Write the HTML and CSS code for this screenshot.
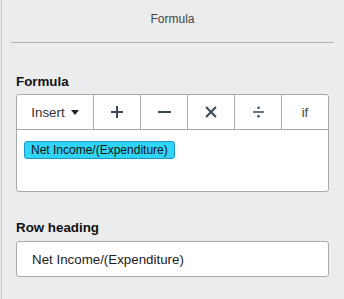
FILE: index.html
```html
<!DOCTYPE html>
<html>
<head>
  <meta charset="utf-8">
  <link rel="stylesheet" href="styles.css">
</head>
<body>
<div class="panel">
  <div class="panel-header">Formula</div>
  <div class="panel-body">
    <div class="field-label">Formula</div>
    <div class="formula-box">
      <div class="toolbar">
        <div class="tool tool-insert">Insert <span class="caret"></span></div>
        <div class="tool">
          <svg width="12" height="12" viewBox="0 0 12 12"><path d="M6 0V12M0 6H12" stroke="#3b4858" stroke-width="2"/></svg>
        </div>
        <div class="tool">
          <svg width="13" height="12" viewBox="0 0 13 12"><path d="M0 6H13" stroke="#3b4858" stroke-width="2"/></svg>
        </div>
        <div class="tool">
          <svg width="12" height="12" viewBox="0 0 12 12"><path d="M1 1L11 11M11 1L1 11" stroke="#3b4858" stroke-width="2"/></svg>
        </div>
        <div class="tool">
          <svg width="11" height="12" viewBox="0 0 11 12"><path d="M0 6H11" stroke="#3b4858" stroke-width="1.5"/><circle cx="5.5" cy="1.8" r="1.3" fill="#3b4858"/><circle cx="5.5" cy="10.2" r="1.3" fill="#3b4858"/></svg>
        </div>
        <div class="tool tool-if">if</div>
      </div>
      <div class="formula-area">
        <span class="chip">Net Income/(Expenditure)</span>
      </div>
    </div>
    <div class="field-label label-row">Row heading</div>
    <div class="text-input">Net Income/(Expenditure)</div>
  </div>
</div>
</body>
</html>
```

FILE: styles.css
```css
body {
  margin: 0;
  background: #ebecee;
  font-family: "Liberation Sans", Arial, sans-serif;
  color: #222;
}

.panel {
  margin-left: 1px;
  border-left: 1px solid #c5c7ca;
  height: 299px;
  box-sizing: border-box;
}

.panel-header {
  margin: 0 10px 0 9px;
  height: 43px;
  box-sizing: border-box;
  padding-top: 12px;
  font-size: 12px;
  line-height: 14px;
  color: #444;
  text-align: center;
  border-bottom: 1px solid #aeb3ba;
}

.panel-body {
  padding: 31px 15px 0 14px;
}

.field-label {
  font-size: 13.33px;
  font-weight: bold;
  line-height: 16px;
  color: #111;
  margin-bottom: 4px;
}

.label-row {
  margin-top: 28px;
  margin-bottom: 5px;
}

.formula-box {
  background: #fff;
  border: 1px solid #a9a9a9;
  border-radius: 3px;
}

.toolbar {
  display: flex;
  height: 34px;
  border-bottom: 1px solid #a9a9a9;
}

.tool {
  flex: 1;
  display: flex;
  align-items: center;
  justify-content: center;
  border-left: 1px solid #a9a9a9;
  font-size: 13.33px;
  color: #333;
}

.tool:first-child {
  border-left: 0;
}

.tool-insert {
  flex: 0 0 76px;
}

.caret {
  display: inline-block;
  margin-left: 6px;
  border-left: 4.5px solid transparent;
  border-right: 4.5px solid transparent;
  border-top: 5px solid #222;
}

.tool-if {
  color: #444;
}

.formula-area {
  height: 61px;
  box-sizing: border-box;
  padding: 10px 7px;
}

.chip {
  display: inline-block;
  font-size: 12px;
  line-height: 16px;
  padding: 0 6px;
  background: #30d4f4;
  border: 1px solid #1d98cc;
  border-radius: 3px;
  color: #111;
}

.text-input {
  background: #fff;
  border: 1px solid #aaa;
  border-radius: 3px;
  height: 36px;
  box-sizing: border-box;
  padding-left: 15px;
  display: flex;
  align-items: center;
  font-size: 13.33px;
  color: #222;
}
```
